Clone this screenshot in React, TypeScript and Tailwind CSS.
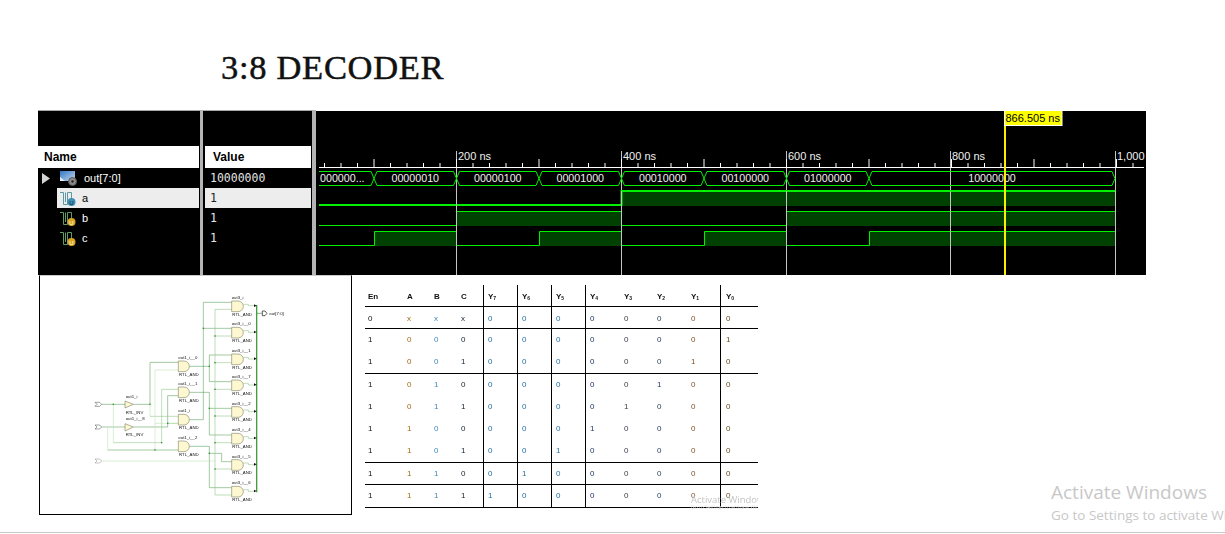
import React from "react";

const majors = [456.5, 621.5, 786.5, 950.5, 1115.5];
const labels: [string, number][] = [["200 ns", 458], ["400 ns", 623], ["600 ns", 788], ["800 ns", 952], ["1,000", 1117]];
const segs: [number, number, string][] = [
  [374, 456.5, "00000010"],
  [456.5, 539, "00000100"],
  [539, 621.5, "00001000"],
  [621.5, 704, "00010000"],
  [704, 786.5, "00100000"],
  [786.5, 869, "01000000"],
  [869, 1115, "10000000"],
];
const G = "#00f000";
const F = "#004000";

function Wave() {
  const ticks: React.ReactNode[] = [];
  for (let i = 0; i <= 49; i++) {
    const x = 324.5 + i * 16.5;
    const major = (i - 3) % 5 === 0;
    ticks.push(<line key={i} x1={x} x2={x} y1={major ? 159 : 163} y2={167} stroke="#fff" />);
  }
  return (
    <svg viewBox="316 111 830 164" className="w-[830px] h-[164px] block bg-black shrink-0">
      {majors.map((x) => (
        <line key={x} x1={x} x2={x} y1={151} y2={275} stroke="#c4c4c4" />
      ))}
      {ticks}
      <line x1={319} x2={1144} y1={167.5} y2={167.5} stroke="#fff" />
      {labels.map(([t, x]) => (
        <text key={t} x={x} y={159.5} fill="#f0f0f0" className="text-[11px]">{t}</text>
      ))}
      {/* signal a */}
      <rect x={621.5} y={191} width={494} height={15} fill={F} />
      <path d="M319 205H621.5V191H1115.5" fill="none" stroke={G} strokeWidth={2} />
      {/* signal b */}
      <rect x={456.5} y={211.5} width={165} height={14.5} fill={F} />
      <rect x={786.5} y={211.5} width={329} height={14.5} fill={F} />
      <path d="M319 225.5H456.5V211.5H621.5V225.5H786.5V211.5H1115.5" fill="none" stroke={G} />
      {/* signal c */}
      <rect x={374} y={231.5} width={82.5} height={14.5} fill={F} />
      <rect x={539} y={231.5} width={82.5} height={14.5} fill={F} />
      <rect x={704} y={231.5} width={82.5} height={14.5} fill={F} />
      <rect x={869} y={231.5} width={246.5} height={14.5} fill={F} />
      <path d="M319 245.5H374.5V231.5H456.5V245.5H539.5V231.5H621.5V245.5H704.5V231.5H786.5V245.5H869.5V231.5H1115.5" fill="none" stroke={G} />
      {majors.map((x) => (
        <line key={x} x1={x} x2={x} y1={191} y2={246} stroke="#c4c4c4" />
      ))}
      {/* bus */}
      <path d="M319 171.5H371L374 178.5L371 185.5H319" fill="none" stroke={G} />
      <text x={320} y={182} fill="#f0f0f0" className="text-[10.7px]">000000...</text>
      {segs.map(([a, b, t]) => (
        <g key={t}>
          <path d={`M${a} 178.5L${a + 3} 171.5H${b - 3}L${b} 178.5L${b - 3} 185.5H${a + 3}Z`} fill="none" stroke={G} />
          <text x={(a + b) / 2} y={182} textAnchor="middle" fill="#f0f0f0" className="text-[10.7px]">{t}</text>
        </g>
      ))}
      {/* cursor */}
      <rect x={1004} y={126} width={2} height={149} fill="#f8f000" />
      <rect x={1004.5} y={110.5} width={57.5} height={15} fill="#ffff00" stroke="#fff" />
      <text x={1005.5} y={122} fill="#000" className="text-[11px]">866.505 ns</text>
    </svg>
  );
}

function BusIcon() {
  return (
    <svg viewBox="0 0 18 16" className="w-[18px] h-[16px] shrink-0">
      <defs>
        <linearGradient id="bg" x1="0" y1="0" x2="1" y2="1">
          <stop offset="0" stopColor="#2f78c8" />
          <stop offset="1" stopColor="#c8d8ea" />
        </linearGradient>
      </defs>
      <rect x="0" y="1" width="15" height="10" fill="url(#bg)" />
      <path d="M0 7L5 11H0Z" fill="#e8eef5" />
      <circle cx="12.5" cy="11.5" r="4" fill="#8b8b8b" stroke="#555" />
      <circle cx="12.5" cy="11.5" r="1.2" fill="#222" />
    </svg>
  );
}

function BitIcon({ selected }: { selected?: boolean }) {
  const line = selected ? "#5a9aa0" : "#5f9f5f";
  return (
    <svg viewBox="0 0 16 17" className="w-[16px] h-[17px] shrink-0">
      <path d="M0 2.5H3.5V14.5H7.5V2.5H11.5V9" fill="none" stroke={line} strokeWidth="1" />
      <path d="M5.5 2.5V12" fill="none" stroke={line} strokeWidth="1" />
      <circle cx="11.5" cy="12" r="4" fill={selected ? "#3f8fb5" : "#d8a520"} />
      <text x="11.5" y="14.5" textAnchor="middle" fill={selected ? "#123" : "#fff"} className="text-[6px]">U</text>
    </svg>
  );
}

function Gate({ x, y, top, w = 35 }: { x: number; y: number; top: string; w?: number }) {
  return (
    <g>
      <path
        d={`M${x} ${y - 16}H${x + w - 16}A16 16 0 0 1 ${x + w - 16} ${y + 16}H${x}Z`}
        fill="#fdf8cf"
        stroke="#66674c"
        strokeWidth="1.5"
      />
      <text x={x} y={y - 22} fill="#111" className="text-[13px]">{top}</text>
      <text x={x + 2} y={y + 28} fill="#111" className="text-[13px]">RTL_AND</text>
    </g>
  );
}

function Schematic() {
  const right: [number, string][] = [
    [94, "out3_i"], [173, "out3_i__0"], [253, "out3_i__1"], [331, "out3_i__7"],
    [411, "out3_i__2"], [491, "out3_i__4"], [570, "out3_i__5"], [650, "out3_i__6"],
  ];
  const mid: [number, string][] = [[274, "out1_i__0"], [352, "out1_i__1"], [434, "out1_i"], [514, "out1_i__2"]];
  const dark = "#4f9a4f";
  const light = "#b9deb0";
  const med = "#86c07e";
  const dots = [[235, 388], [345, 388], [398, 445], [380, 503], [360, 525], [523, 274], [523, 400], [505, 160], [540, 183], [540, 263], [540, 343], [540, 423], [540, 503], [523, 535], [540, 582]];
  return (
    <svg viewBox="15 3 933 714" className="w-[311px] h-[238px] block blur-[0.5px]">
      <g fill="none" strokeWidth="1.6">
        <g stroke={dark}>
          <path d="M200 388H270M295 388H345V262H430" />
          <path d="M200 456H270M295 456H398V362H430" />
          <path d="M218 525H430" />
          <path d="M463 274H523M523 240V320M523 240H590M523 320H590" />
          <path d="M463 352H523V480H590M523 400H590" />
          <path d="M463 434H505V82H590M505 160H590" />
          <path d="M463 514H523V638H590M523 535H560V560H590" />
        </g>
        <g stroke={med}>
          <path d="M398 445H430M380 503V343H430M235 503H380M345 424H430" />
          <path d="M540 103V660H590M540 103H590M540 183H590M540 263H590M540 343H590M540 423H590M540 503H590M540 582H590" />
          <path d="M625 88L640 88V92H660M625 167H640V172H660M625 247H640V252H660M625 325H640V330H660M625 405H640V410H660M625 485H640V490H660M625 564H640V569H660M625 644H640V649H660" />
        </g>
        <g stroke={light}>
          <path d="M235 388V503M218 456V525M345 388V424M360 525V285H430M360 445H430" />
          <path d="M200 558H540" />
        </g>
        <path d="M665 90V652" stroke="#3f9f3f" strokeWidth="4" />
        <path d="M665 115H682" stroke="#3f8f3f" strokeWidth="2" />
      </g>
      {dots.map(([x, y]) => (
        <rect key={`${x}-${y}`} x={x - 2} y={y - 2} width="4" height="4" fill="#2f8f2f" />
      ))}
      {right.map(([y, t]) => (
        <g key={t}>
          <Gate x={590} y={y} top={t} />
          <path d={`M657 ${y - 6}l8 4l-8 4Z`} fill="#111" />
        </g>
      ))}
      {mid.map(([y, t]) => (
        <Gate key={t} x={430} y={y} top={t} w={33} />
      ))}
      <g fill="#fdf8cf" stroke="#66674c" strokeWidth="1.5">
        <path d="M270 378L295 388L270 399Z" />
        <path d="M270 446L295 456L270 468Z" />
      </g>
      <g fill="#111" className="text-[13px]">
        <text x="272" y="368">out1_i</text>
        <text x="272" y="416">RTL_INV</text>
        <text x="272" y="434">out1_i__8</text>
        <text x="272" y="484">RTL_INV</text>
        <text x="703" y="121">out[7:0]</text>
      </g>
      <g fill="#fff" stroke="#444" strokeWidth="1.5">
        <path d="M180 382H194L200 388L194 394H180L186 388Z" />
        <path d="M180 450H194L200 456L194 462H180L186 456Z" />
        <path d="M180 552H194L200 558L194 564H180L186 558Z" stroke="#888" />
        <path d="M682 108H690L696 115L690 122H682Z" stroke="#111" strokeWidth="2" />
      </g>
    </svg>
  );
}

const rows = [
  "0xxx00000000",
  "100000000001",
  "100100000010",
  "101000000100",
  "101100001000",
  "110000010000",
  "110100100000",
  "111001000000",
  "111110000000",
];
const rowClass = [
  "h-[22px] border-b pt-[2px]",
  "h-[22px]",
  "h-[23px] border-b",
  "h-[22px]",
  "h-[22px]",
  "h-[22px]",
  "h-[23px] border-b",
  "h-[22px] border-b",
  "h-[23px] border-b",
];
const colClass = [
  "text-[#111] pl-[3px]",
  "text-[#a06a10] pl-[3px]",
  "text-[#3f86b8] pl-[3px]",
  "text-[#112233] border-r pl-[3px]",
  "text-[#1f6da0] border-r pl-[4px]",
  "text-[#1f6da0] border-r pl-[4px]",
  "text-[#1f6da0] border-r pl-[4px]",
  "text-[#1c3560] pl-[4px]",
  "text-[#383e48] pl-[3px]",
  "text-[#283e5a] pl-[3px]",
  "text-[#7f5028] border-r pl-[3px]",
  "text-[#5f5020] pl-[5px]",
];
const widths = ["w-[39px]", "w-[27px]", "w-[27px]", "w-[26px]", "w-[34px]", "w-[34px]", "w-[34px]", "w-[35px]", "w-[33px]", "w-[34px]", "w-[33px]", "w-[37px]"];
const heads: [string, string][] = [["En", ""], ["A", ""], ["B", ""], ["C", ""], ["Y", "7"], ["Y", "6"], ["Y", "5"], ["Y", "4"], ["Y", "3"], ["Y", "2"], ["Y", "1"], ["Y", "0"]];

function TruthTable() {
  return (
    <div className="relative ml-[13px] mt-[10px]">
      <table className="table-fixed w-[393px] border-separate border-spacing-0 text-[8px] blur-[0.3px] font-['Liberation_Sans',sans-serif]">
        <colgroup>
          {widths.map((w, i) => (
            <col key={i} className={w} />
          ))}
        </colgroup>
        <thead>
          <tr className="h-[22px]">
            {heads.map(([a, b], i) => (
              <th key={i} className={`text-left align-middle pt-[2px] font-bold !text-[#111] border-b border-black ${colClass[i]}`}>
                {a}
                {b && <sub className="text-[5px]">{b}</sub>}
              </th>
            ))}
          </tr>
        </thead>
        <tbody>
          {rows.map((r, ri) => (
            <tr key={ri}>
              {r.split("").map((c, ci) => (
                <td key={ci} className={`${rowClass[ri]} ${colClass[ci]} border-black text-left align-middle`}>
                  {c}
                </td>
              ))}
            </tr>
          ))}
        </tbody>
      </table>
      <div className="absolute left-[326px] top-[209px] w-[67px] overflow-hidden whitespace-nowrap text-[#c4c4c4] blur-[0.4px] font-['Open_Sans',sans-serif]">
        <div className="text-[9.5px] leading-[11px]">Activate Windows</div>
        <div className="text-[5px] leading-[5px] text-[#dddddd]">Go to Settings to activate Windows.</div>
      </div>
    </div>
  );
}

function NameRow({ label, selected, children }: { label: string; selected?: boolean; children: React.ReactNode }) {
  return (
    <div className="flex h-[20px] items-center">
      <div className="w-[19px] shrink-0" />
      <div className={`flex items-center gap-[6px] w-[142px] h-full pl-[3px] text-[11px] ${selected ? "bg-[#ededed] text-black" : "text-white"}`}>
        {children}
        <span className="leading-none">{label}</span>
      </div>
    </div>
  );
}

function ValueRow({ v, selected }: { v: string; selected?: boolean }) {
  return (
    <div className={`h-[20px] mx-[2px] w-[106px] pl-[5px] pt-[2px] flex items-center font-['DejaVu_Sans_Mono',monospace] text-[11.5px] ${selected ? "bg-[#ededed] text-[#222]" : "text-[#e4e4e4]"}`}>
      {v}
    </div>
  );
}

export default function App() {
  return (
    <div className="relative w-[1225px] h-[534px] bg-white overflow-hidden flex flex-col font-['Liberation_Sans',sans-serif]">
      <h1 className="pl-[221px] pt-[47px] h-[110px] text-[34.5px] leading-[40px] text-[#111] font-['Liberation_Serif',serif] font-normal tracking-[0.7px] [-webkit-text-stroke:0.5px_#111]">
        3:8 DECODER
      </h1>
      <div className="flex ml-[38px] h-[165px]">
        <div className="w-[162px] bg-black flex flex-col relative">
          <div className="h-[36px] shrink-0" />
          <div className="h-[22px] shrink-0 w-[161px] bg-white text-black font-bold text-[12px] pl-[6px] flex items-center">Name</div>
          <div className="relative">
            <NameRow label="out[7:0]"><BusIcon /></NameRow>
            <svg viewBox="0 0 8 11" className="absolute left-[4px] top-[5px] w-[8px] h-[11px]">
              <path d="M0 0L8 5.5L0 11Z" fill="#d4d4d4" />
            </svg>
          </div>
          <NameRow label="a" selected><BitIcon selected /></NameRow>
          <NameRow label="b"><BitIcon /></NameRow>
          <NameRow label="c"><BitIcon /></NameRow>
          <div className="absolute left-0 top-0 w-full h-px bg-[#a8a8a8]" />
        </div>
        <div className="w-[3px] bg-[#b4b4b4]" />
        <div className="w-[109px] bg-black flex flex-col relative">
          <div className="h-[36px] shrink-0" />
          <div className="h-[22px] shrink-0 mx-[2px] w-[106px] bg-white text-black font-bold text-[12px] pl-[8px] flex items-center">Value</div>
          <ValueRow v="10000000" />
          <ValueRow v="1" selected />
          <ValueRow v="1" />
          <ValueRow v="1" />
          <div className="absolute left-0 top-0 w-full h-px bg-[#a8a8a8]" />
        </div>
        <div className="w-[4px] bg-[#b4b4b4]" />
        <div className="pt-[1px]">
          <Wave />
        </div>
      </div>
      <div className="flex ml-[39px]">
        <div className="w-[313px] h-[240px] border-x border-b border-black border-t border-t-[#cccccc]">
          <Schematic />
        </div>
        <TruthTable />
      </div>
      <div className="mt-auto mb-[1px] h-px bg-[#c8c8c8]" />
      <div className="absolute left-[1051px] top-[480px] w-[174px] overflow-hidden whitespace-nowrap text-[#c8c8c8] font-['Open_Sans',sans-serif]">
        <div className="text-[19px] leading-[25px]">Activate Windows</div>
        <div className="text-[13.5px] leading-[21px]">Go to Settings to activate Windows.</div>
      </div>
    </div>
  );
}
